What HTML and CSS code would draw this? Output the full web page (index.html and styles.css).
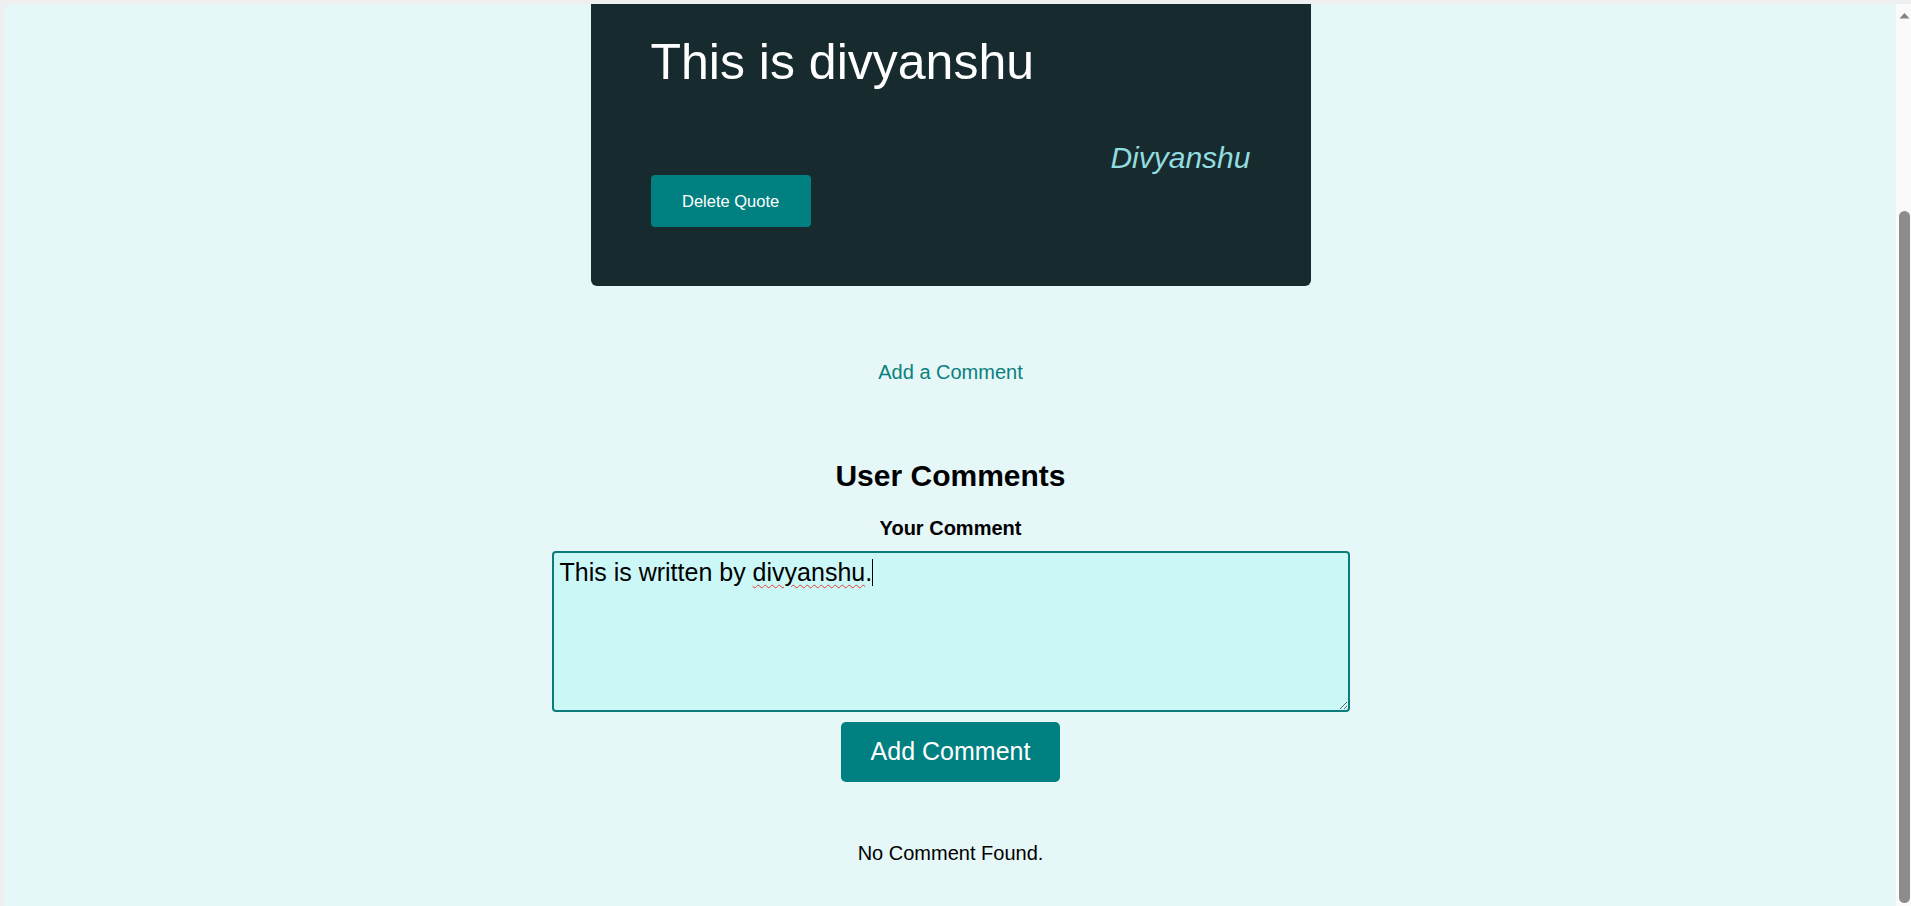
FILE: index.html
```html
<!DOCTYPE html>
<html lang="en">
<head>
<meta charset="utf-8">
<title>Quote Details</title>
<link rel="stylesheet" href="styles.css">
</head>
<body>
<div class="window">
  <main class="page">
    <section class="quote-card">
      <h1 class="quote-text">This is divyanshu</h1>
      <p class="quote-author">Divyanshu</p>
      <button class="btn btn-delete" type="button">Delete Quote</button>
    </section>

    <a class="add-link" href="#">Add a Comment</a>

    <section class="comments">
      <h2 class="comments-title">User Comments</h2>
      <form class="comment-form">
        <label class="comment-label">Your Comment</label>
        <div class="comment-input" contenteditable="true" role="textbox" aria-multiline="true">This is written by <span class="misspelled">divyanshu</span>.<span class="caret"></span></div>
        <button class="btn btn-add" type="button">Add Comment</button>
      </form>
      <p class="empty">No Comment Found.</p>
    </section>
  </main>
  <div class="scrollbar" aria-hidden="true">
    <svg class="arrow-up" width="11" height="7" viewBox="0 0 11 7"><path d="M0.5 6.5 L5.5 1 L10.5 6.5 Z" fill="#858585"/></svg>
    <span class="thumb"></span>
  </div>
</div>
</body>
</html>
```

FILE: styles.css
```css
html, body {
  margin: 0;
  height: 100%;
}

body {
  background: #efefef;
  font-family: "Liberation Sans", Arial, sans-serif;
  overflow: hidden;
}

.window {
  display: flex;
  margin: 4px 0 0 4px;
  height: 902px;
  background: #e5f7f7;
  border-top-left-radius: 8px;
  overflow: hidden;
}

.page {
  flex: 1;
  display: flex;
  flex-direction: column;
  align-items: center;
  padding-left: 1px;
}

/* quote card */
.quote-card {
  box-sizing: border-box;
  width: 720px;
  padding: 29px 60px 59px;
  background: #172a2d;
  border-radius: 0 0 6px 6px;
  display: flex;
  flex-direction: column;
  align-items: flex-start;
}

.quote-text {
  margin: 0 0 49px;
  font-size: 50px;
  line-height: 58px;
  font-weight: normal;
  color: #ffffff;
}

.quote-author {
  align-self: stretch;
  margin: 0;
  text-align: right;
  font-size: 30px;
  line-height: 35px;
  font-style: italic;
  color: #92dce0;
}

.btn {
  border: none;
  background: #008080;
  color: #ffffff;
  font-family: "Liberation Sans", Arial, sans-serif;
  cursor: pointer;
}

.btn-delete {
  font-size: 16.5px;
  line-height: 20px;
  padding: 16px 31.5px;
  border-radius: 4px;
}

/* add link */
.add-link {
  margin-top: 75px;
  font-size: 20px;
  line-height: 23px;
  color: #0a8080;
  text-decoration: none;
}

/* comments */
.comments {
  display: flex;
  flex-direction: column;
  align-items: center;
}

.comments-title {
  margin: 74px 0 0;
  font-size: 30px;
  line-height: 35px;
  font-weight: bold;
  color: #000;
}

.comment-form {
  display: flex;
  flex-direction: column;
  align-items: center;
}

.comment-label {
  margin-top: 24px;
  font-size: 20px;
  line-height: 23px;
  font-weight: bold;
  color: #000;
}

.comment-input {
  box-sizing: border-box;
  margin-top: 11px;
  width: 798px;
  height: 161px;
  padding: 5px 6px;
  border: 2px solid #0b7b7b;
  border-radius: 4px;
  background: #ccf7f7;
  font-size: 25px;
  line-height: 29px;
  color: #000;
  text-align: left;
  resize: both;
  overflow: auto;
  outline: none;
}

.misspelled {
  text-decoration: underline wavy #e53935;
  text-decoration-thickness: 1px;
  text-underline-offset: 3px;
}

.caret {
  display: inline-block;
  width: 1px;
  height: 27px;
  background: #000;
  vertical-align: -5px;
}

.btn-add {
  margin-top: 10px;
  font-size: 25px;
  line-height: 29px;
  padding: 15px 30px 16px;
  border-radius: 5px;
}

.empty {
  margin: 60px 0 0;
  font-size: 20px;
  line-height: 23px;
  color: #000;
}

/* fake scrollbar */
.scrollbar {
  width: 15px;
  background: #fafafa;
  display: flex;
  flex-direction: column;
  align-items: flex-end;
}

.arrow-up {
  display: block;
  margin: 8px 1px 0 0;
  flex: none;
}

.thumb {
  flex: 1;
  margin: 192px 1px 3px 0;
  width: 11px;
  border-radius: 6px;
  background: #8c8c8c;
}
```
